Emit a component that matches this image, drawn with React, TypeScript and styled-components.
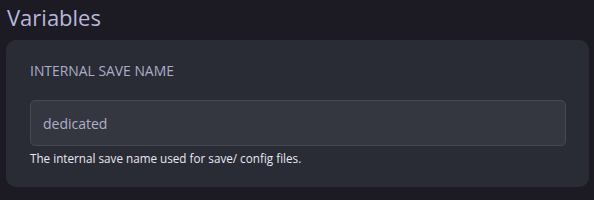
import React from "react";
import styled, { createGlobalStyle } from "styled-components";

const GlobalStyle = createGlobalStyle`
  html, body {
    margin: 0;
    padding: 0;
    background-color: #1c1b24;
    font-family: "Open Sans", "Noto Sans", sans-serif;
  }
`;

const Page = styled.div`
  padding: 0 5px 0 6px;
  display: flex;
  flex-direction: column;
`;

const Title = styled.h2`
  margin: 0;
  padding: 2px 0 0 1px;
  height: 38px;
  font-size: 22px;
  font-weight: 400;
  line-height: 30px;
  color: #b9b7d9;
`;

const Card = styled.div`
  background-color: #2a2c35;
  border-radius: 10px;
  padding: 22px 23px 21px 24px;
  display: flex;
  flex-direction: column;
`;

const Label = styled.label`
  font-size: 13.9px;
  line-height: 18px;
  color: #aeadc8;
  text-transform: uppercase;
  margin-bottom: 20px;
`;

const Input = styled.input`
  box-sizing: border-box;
  height: 46px;
  width: 100%;
  padding: 0 12px;
  background-color: #353740;
  border: 1px solid #474852;
  border-radius: 5px;
  color: #b0aecb;
  font-family: inherit;
  font-size: 14px;
  outline: none;
`;

const Help = styled.div`
  margin-top: 4px;
  font-size: 11.7px;
  line-height: 16px;
  color: #e9e7f3;
`;

export default function App() {
  return (
    <>
      <GlobalStyle />
      <Page>
        <Title>Variables</Title>
        <Card>
          <Label>Internal save name</Label>
          <Input type="text" defaultValue="dedicated" readOnly />
          <Help>The internal save name used for save/ config files.</Help>
        </Card>
      </Page>
    </>
  );
}
